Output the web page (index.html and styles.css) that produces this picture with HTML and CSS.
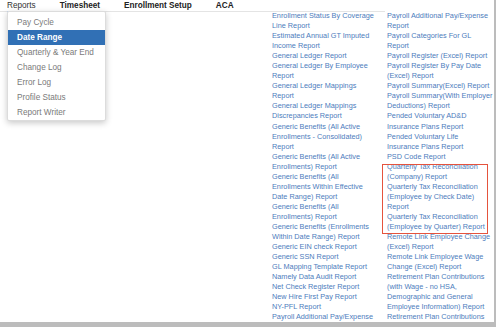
FILE: index.html
```html
<!DOCTYPE html>
<html>
<head>
  <link rel="stylesheet" href="styles.css">
</head>
<body>
  <div class="page">
    <div class="nav">
      <span class="nav-item active">Reports</span>
      <span class="nav-item">Timesheet</span>
      <span class="nav-item">Enrollment Setup</span>
      <span class="nav-item">ACA</span>
    </div>

    <ul class="dropdown">
      <li>Pay Cycle</li>
      <li class="selected">Date Range</li>
      <li>Quarterly &amp; Year End</li>
      <li>Change Log</li>
      <li>Error Log</li>
      <li>Profile Status</li>
      <li>Report Writer</li>
    </ul>

    <div class="reports">
      <div class="col">
        <a>Enrollment Status By Coverage<br>Line Report</a>
        <a>Estimated Annual GT Imputed<br>Income Report</a>
        <a>General Ledger Report</a>
        <a>General Ledger By Employee<br>Report</a>
        <a>General Ledger Mappings<br>Report</a>
        <a>General Ledger Mappings<br>Discrepancies Report</a>
        <a>Generic Benefits (All Active<br>Enrollments - Consolidated)<br>Report</a>
        <a>Generic Benefits (All Active<br>Enrollments) Report</a>
        <a>Generic Benefits (All<br>Enrollments Within Effective<br>Date Range) Report</a>
        <a>Generic Benefits (All<br>Enrollments) Report</a>
        <a>Generic Benefits (Enrollments<br>Within Date Range) Report</a>
        <a>Generic EIN check Report</a>
        <a>Generic SSN Report</a>
        <a>GL Mapping Template Report</a>
        <a>Namely Data Audit Report</a>
        <a>Net Check Register Report</a>
        <a>New Hire First Pay Report</a>
        <a>NY-PFL Report</a>
        <a>Payroll Additional Pay/Expense</a>
      </div>
      <div class="col">
        <a>Payroll Additional Pay/Expense<br>Report</a>
        <a>Payroll Categories For GL<br>Report</a>
        <a>Payroll Register (Excel) Report</a>
        <a>Payroll Register By Pay Date<br>(Excel) Report</a>
        <a>Payroll Summary(Excel) Report</a>
        <a>Payroll Summary(With Employer<br>Deductions) Report</a>
        <a>Pended Voluntary AD&amp;D<br>Insurance Plans Report</a>
        <a>Pended Voluntary Life<br>Insurance Plans Report</a>
        <a>PSD Code Report</a>
        <div class="marked">
          <a>Quarterly Tax Reconciliation<br>(Company) Report</a>
          <a>Quarterly Tax Reconciliation<br>(Employee by Check Date)<br>Report</a>
          <a>Quarterly Tax Reconciliation<br>(Employee by Quarter) Report</a>
        </div>
        <a>Remote Link Employee Change<br>(Excel) Report</a>
        <a>Remote Link Employee Wage<br>Change (Excel) Report</a>
        <a>Retirement Plan Contributions<br>(with Wage - no HSA,<br>Demographic and General<br>Employee Information) Report</a>
        <a>Retirement Plan Contributions</a>
      </div>
    </div>
  </div>
</body>
</html>
```

FILE: styles.css
```css
html, body {
  margin: 0;
  padding: 0;
}
body {
  background: #bcbcbc;
  font-family: "Liberation Sans", Arial, sans-serif;
  width: 496px;
  height: 327px;
  overflow: hidden;
}
.page {
  position: relative;
  width: 494px;
  height: 322px;
  background: #fff;
  overflow: hidden;
}

/* top navigation */
.nav {
  display: flex;
  gap: 24px;
  width: 378px;
  height: 11px;
  padding-left: 7px;
  border-bottom: 1px solid #e4e4e4;
  font-size: 8.2px;
  line-height: 11px;
  color: #222;
}
.nav-item {
  font-weight: bold;
}
.nav-item.active {
  font-weight: normal;
  color: #333;
  box-shadow: 0 1px 0 #c9d9ee;
}

/* menu dropped from Reports */
.dropdown {
  position: absolute;
  top: 11px;
  left: 7px;
  width: 97px;
  margin: 0;
  padding: 3px 0 0;
  list-style: none;
  background: #fff;
  border: 1px solid #dcdcdc;
  border-radius: 2px;
  box-shadow: 0 2px 6px rgba(0, 0, 0, 0.22);
  font-size: 8.2px;
  line-height: 15px;
  color: #7a7a7a;
}
.dropdown li {
  padding-left: 9px;
}
.dropdown li.selected {
  background: #3170b5;
  color: #fff;
  font-weight: bold;
}

/* report links */
.reports {
  display: flex;
  padding-left: 272px;
  margin-top: -1px;
}
.col {
  display: flex;
  flex-direction: column;
  flex-shrink: 0;
  width: 115px;
  font-size: 7.3px;
  line-height: 10.05px;
  color: #4d7dbd;
  white-space: nowrap;
}
.col a {
  display: block;
}
.marked {
  position: relative;
}
.marked:after {
  content: '';
  position: absolute;
  top: 2px;
  bottom: -2px;
  left: -5px;
  width: 104px;
  border: 1px solid #e5533d;
}
```
